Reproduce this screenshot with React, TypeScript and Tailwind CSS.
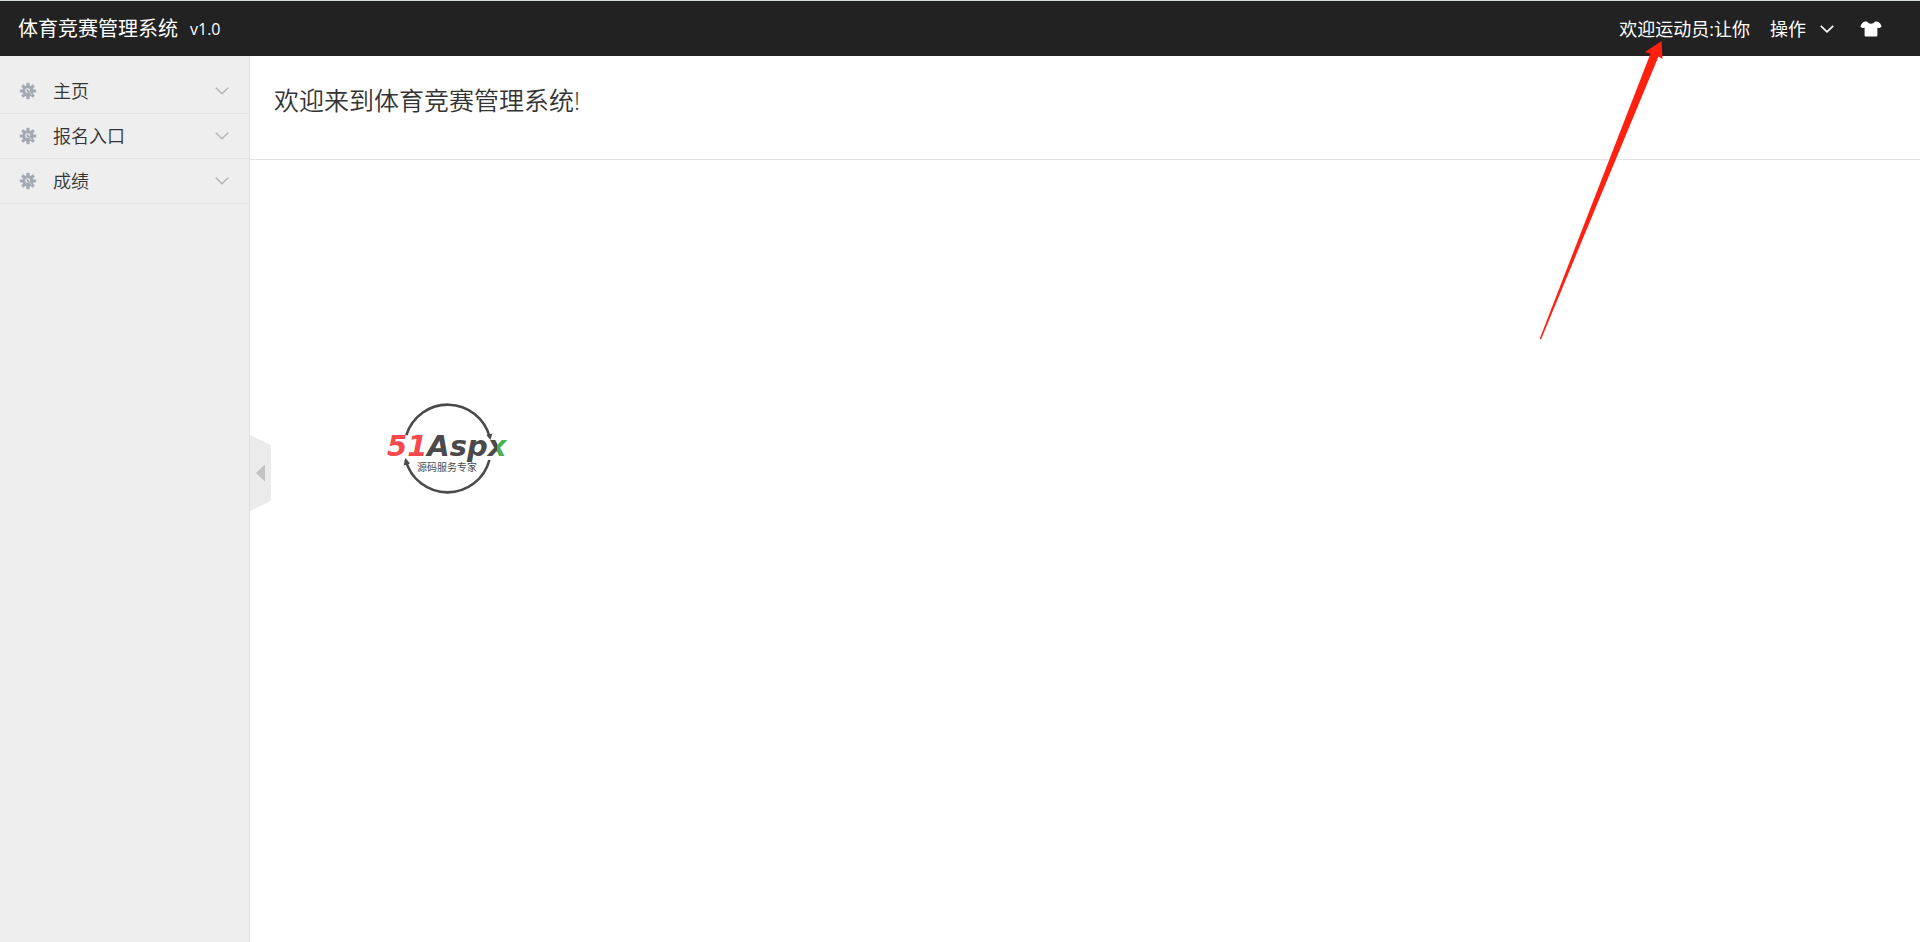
import React from "react";
import { clsx } from "clsx";

const menuItems = [
  { label: "主页", children: ["我的主页"] },
  { label: "报名入口", children: ["项目报名"] },
  { label: "成绩", children: ["成绩查询"] },
];

function GearIcon() {
  return (
    <svg width="18" height="18" viewBox="0 0 18 18" aria-hidden="true">
      <g fill="#a3a9b3">
        {[0, 45, 90, 135, 180, 225, 270, 315].map((deg) => (
          <rect key={deg} x="7.4" y="0.8" width="3.2" height="5" rx="0.8" transform={`rotate(${deg} 9 9)`} />
        ))}
        <circle cx="9" cy="9" r="5.7" />
      </g>
      <circle cx="8.6" cy="8.6" r="2.5" fill="#e2e4e7" />
      <path d="M7.4 6.6 L10.6 9.2 L9.6 10.8 L8.2 9.6 Z" fill="#969da8" />
      <path d="M11.2 11 L13 12.8" stroke="#d9dce0" strokeWidth="1" />
    </svg>
  );
}

function ChevronIcon({ className }: { className?: string }) {
  return (
    <svg width="14" height="8" viewBox="0 0 14 8" fill="none" stroke="currentColor" className={className} aria-hidden="true">
      <path d="M0.8 0.8 L7 6.8 L13.2 0.8" />
    </svg>
  );
}

function ShirtIcon() {
  return (
    <svg width="22" height="16" viewBox="0 0 22 16" fill="currentColor" aria-hidden="true">
      <path d="M7 0.6 C8 2.2 9.4 2.7 11 2.7 C12.6 2.7 14 2.2 15 0.6 C17 0.7 18.6 1 19.6 2 C20.6 3 21.3 4.4 21.6 5.6 C21.2 6.4 19.8 7.1 18.5 7.1 L17.4 6.6 V14.6 Q17.4 15.6 16.4 15.6 H5.6 Q4.6 15.6 4.6 14.6 V6.6 L3.5 7.1 C2.2 7.1 0.8 6.4 0.4 5.6 C0.7 4.4 1.4 3 2.4 2 C3.4 1 5 0.7 7 0.6 Z" />
    </svg>
  );
}

function Logo() {
  return (
    <svg width="128" height="96" viewBox="0 0 128 96" role="img" aria-label="51Aspx 源码服务专家">
      <defs>
        <linearGradient id="logo-x" gradientUnits="userSpaceOnUse" x1="101" x2="121" y1="0" y2="0">
          <stop offset="0.5" stopColor="#4a4a4a" />
          <stop offset="0.5" stopColor="#4caf50" />
        </linearGradient>
      </defs>
      <g fill="none" stroke="#4a4a4a" strokeWidth="2.6">
        <path d="M20.4 35 A43.3 43.3 0 0 1 103.6 37" />
        <path d="M19.6 60 A43.3 43.3 0 0 0 103.4 60" />
      </g>
      <path d="M100.4 35 L106.4 33.4 L104.4 40 Z" fill="#4a4a4a" />
      <path d="M17.6 65.6 L19.4 58 L24 63.4 Z" fill="#4a4a4a" />
      <text x="1" y="56" fontSize="29" fill="#4a4a4a" className="font-['DejaVu_Sans'] font-bold italic">
        <tspan fill="#f9484d">51</tspan>Asp<tspan fill="url(#logo-x)">x</tspan>
      </text>
      <text x="61" y="71" textAnchor="middle" fontSize="10" fill="#4a4a4a" className="font-['Noto_Sans_CJK_SC'] font-normal">
        源码服务专家
      </text>
    </svg>
  );
}

function Header() {
  return (
    <header className="flex h-14 shrink-0 items-center justify-between border-t border-[#d5dbd9] bg-[#222] pl-[18px] pr-[38px] font-normal text-white">
      <div className="flex items-center gap-3">
        <a href="#" className="text-xl">体育竞赛管理系统</a>
        <span className="text-base">v1.0</span>
      </div>
      <div className="flex items-center text-lg">
        <span>欢迎运动员:让你</span>
        <button type="button" className="ml-5 flex items-center gap-[14px]">
          操作
          <ChevronIcon className="stroke-[1.7]" />
        </button>
        <button type="button" aria-label="换肤" className="ml-[26px]">
          <ShirtIcon />
        </button>
      </div>
    </header>
  );
}

function Sidebar() {
  const [open, setOpen] = React.useState<string | null>(null);

  return (
    <aside className="w-[250px] shrink-0 border-r border-[#e0e0e0] bg-[#eee] pt-[13px]">
      {menuItems.map((item) => (
        <div key={item.label} className="border-b border-[#e4e4e4]">
          <button
            type="button"
            aria-expanded={open === item.label}
            onClick={() => setOpen(open === item.label ? null : item.label)}
            className="flex h-11 w-full items-center pl-[19px] pr-5 text-lg text-[#333]"
          >
            <GearIcon />
            <span className="ml-4 flex-1 text-left">{item.label}</span>
            <ChevronIcon className={clsx("text-[#b4b4b4] stroke-[1.5]", open === item.label && "rotate-180")} />
          </button>
          {open === item.label && (
            <ul className="bg-white py-2 pl-14 text-base">
              {item.children.map((child) => (
                <li key={child}><a href="#">{child}</a></li>
              ))}
            </ul>
          )}
        </div>
      ))}
    </aside>
  );
}

export default function App() {
  const [collapsed, setCollapsed] = React.useState(false);

  return (
    <div className="relative flex min-h-screen flex-col bg-white font-['Open_Sans','Noto_Sans_CJK_SC',sans-serif] font-[350]">
      <Header />
      <div className="flex flex-1">
        {!collapsed && <Sidebar />}
        <main className="relative min-w-0 flex-1">
          <div className="border-b border-[#e2e2e2] px-6 pt-[26px] pb-10">
            <h1 className="text-[25px] leading-[37px] font-[350] text-[#333]">欢迎来到体育竞赛管理系统!</h1>
          </div>
          <div className="px-[136px] pt-60">
            <Logo />
          </div>
          {/* Sidebar toggle */}
          <button
            type="button"
            aria-label="收起菜单"
            onClick={() => setCollapsed(!collapsed)}
            className="absolute left-0 top-1/2 -mt-16"
          >
            <svg width="21" height="76" viewBox="0 0 21 76" aria-hidden="true">
              <path d="M0 0 L19 9 Q21 10 21 12 V64 Q21 66 19 67 L0 76 Z" fill="#ebebeb" />
              <path d="M6 38 L15 29.5 V46.5 Z" fill="#c2c2c2" />
            </svg>
          </button>
        </main>
      </div>
      {/* Arrow pointing at the user name */}
      <svg
        width="125"
        height="300"
        viewBox="0 0 125 300"
        className="pointer-events-none absolute right-64 top-10"
        aria-hidden="true"
      >
        <path d="M122.5 1 L106 12 L111.5 13.5 L0.8 298.6 L2 299.4 L119.5 16.5 L123.5 19 Z" fill="#ff2010" />
      </svg>
    </div>
  );
}
